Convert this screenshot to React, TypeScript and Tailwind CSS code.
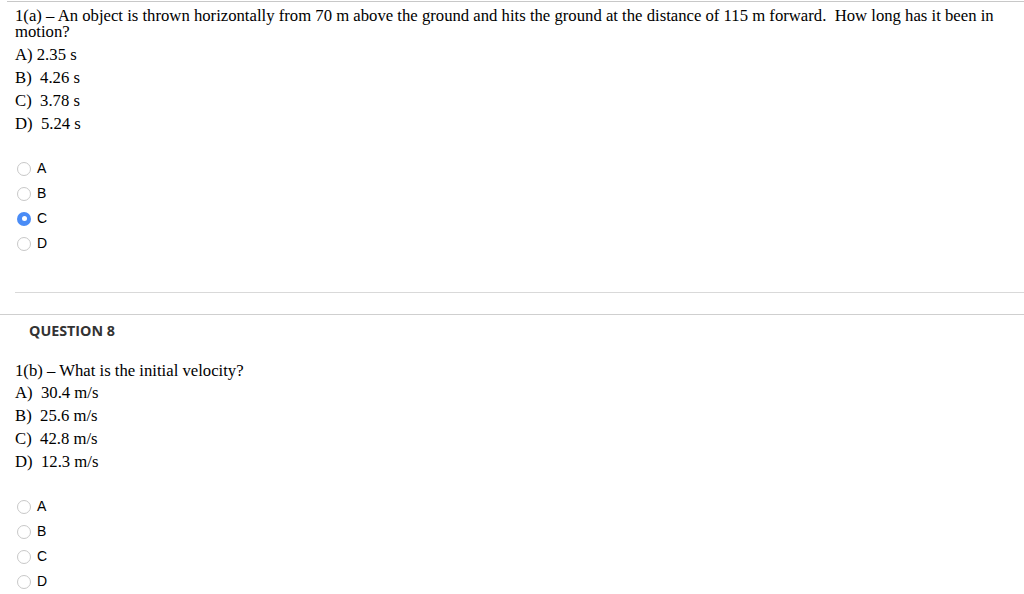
import { useState } from "react";

type Question = {
  id: string;
  title?: string;
  prompt: string;
  options: string[];
  selected?: string | null;
};

const QUESTIONS: Question[] = [
  {
    id: "q7",
    prompt:
      "1(a) \u2013 An object is thrown horizontally from 70 m above the ground and hits the ground at the distance of 115 m forward.\u00a0 How long has it been in motion?",
    options: ["A)\u00a02.35 s", "B)\u00a0 4.26 s", "C)\u00a0 3.78 s", "D)\u00a0 5.24 s"],
    selected: "C",
  },
  {
    id: "q8",
    title: "QUESTION 8",
    prompt: "1(b) \u2013 What is the initial velocity?",
    options: ["A)\u00a0 30.4 m/s", "B)\u00a0 25.6 m/s", "C)\u00a0 42.8 m/s", "D)\u00a0 12.3 m/s"],
    selected: null,
  },
];

const CHOICES = ["A", "B", "C", "D"];

function Radio({ checked }: { checked: boolean }) {
  return checked ? (
    <span className="flex h-[14px] w-[14px] items-center justify-center rounded-full bg-[#4a8cf6]">
      <span className="h-[5px] w-[5px] rounded-full bg-white" />
    </span>
  ) : (
    <span className="h-[14px] w-[14px] rounded-full border border-[#c8c8c8] bg-white" />
  );
}

function AnswerList({ qid, initial }: { qid: string; initial: string | null }) {
  const [value, setValue] = useState<string | null>(initial);
  return (
    <div className="flex flex-col pl-[17px]">
      {CHOICES.map((c) => (
        <label
          key={c}
          className="flex h-[25px] cursor-pointer items-center gap-[6px] text-[14px] text-black"
          style={{ fontFamily: "'Liberation Sans', Arial, sans-serif" }}
          onClick={() => setValue(c)}
        >
          <input type="radio" name={qid} className="hidden" readOnly checked={value === c} />
          <Radio checked={value === c} />
          <span>{c}</span>
        </label>
      ))}
    </div>
  );
}

function QuestionBody({ q, gap }: { q: Question; gap: string }) {
  return (
    <div
      className="pl-[15px] pr-[28px] text-[16.7px] text-black"
      style={{ fontFamily: "'Liberation Serif', serif" }}
    >
      <p className="leading-[16px]">{q.prompt}</p>
      <div className={gap}>
        {q.options.map((o) => (
          <p key={o} className="leading-[23px]">
            {o}
          </p>
        ))}
      </div>
    </div>
  );
}

export default function App() {
  const [first, second] = QUESTIONS;
  return (
    <div className="min-h-[594px] w-[1024px] overflow-hidden bg-white">
      <div className="ml-[7px] mt-[1px] border-t border-[#c8c8c8]" />

      <section className="pt-[6px]">
        <QuestionBody q={first} gap="mt-[3px]" />
        <div className="mt-[21px]">
          <AnswerList qid={first.id} initial={first.selected ?? null} />
        </div>
        <div className="ml-[15px] mt-[36px] border-t border-[#d9d9d9]" />
      </section>

      <section className="mt-[21px] border-t border-[#cfcfcf]">
        <h2
          className="pl-[29px] pt-[8px] text-[14.3px] font-bold leading-[16px] text-[#333]"
          style={{ fontFamily: "'Open Sans', sans-serif" }}
        >
          {second.title}
        </h2>
        <div className="pt-[24px]">
          <QuestionBody q={second} gap="mt-[2px]" />
        </div>
        <div className="mt-[21px]">
          <AnswerList qid={second.id} initial={second.selected ?? null} />
        </div>
      </section>
    </div>
  );
}
